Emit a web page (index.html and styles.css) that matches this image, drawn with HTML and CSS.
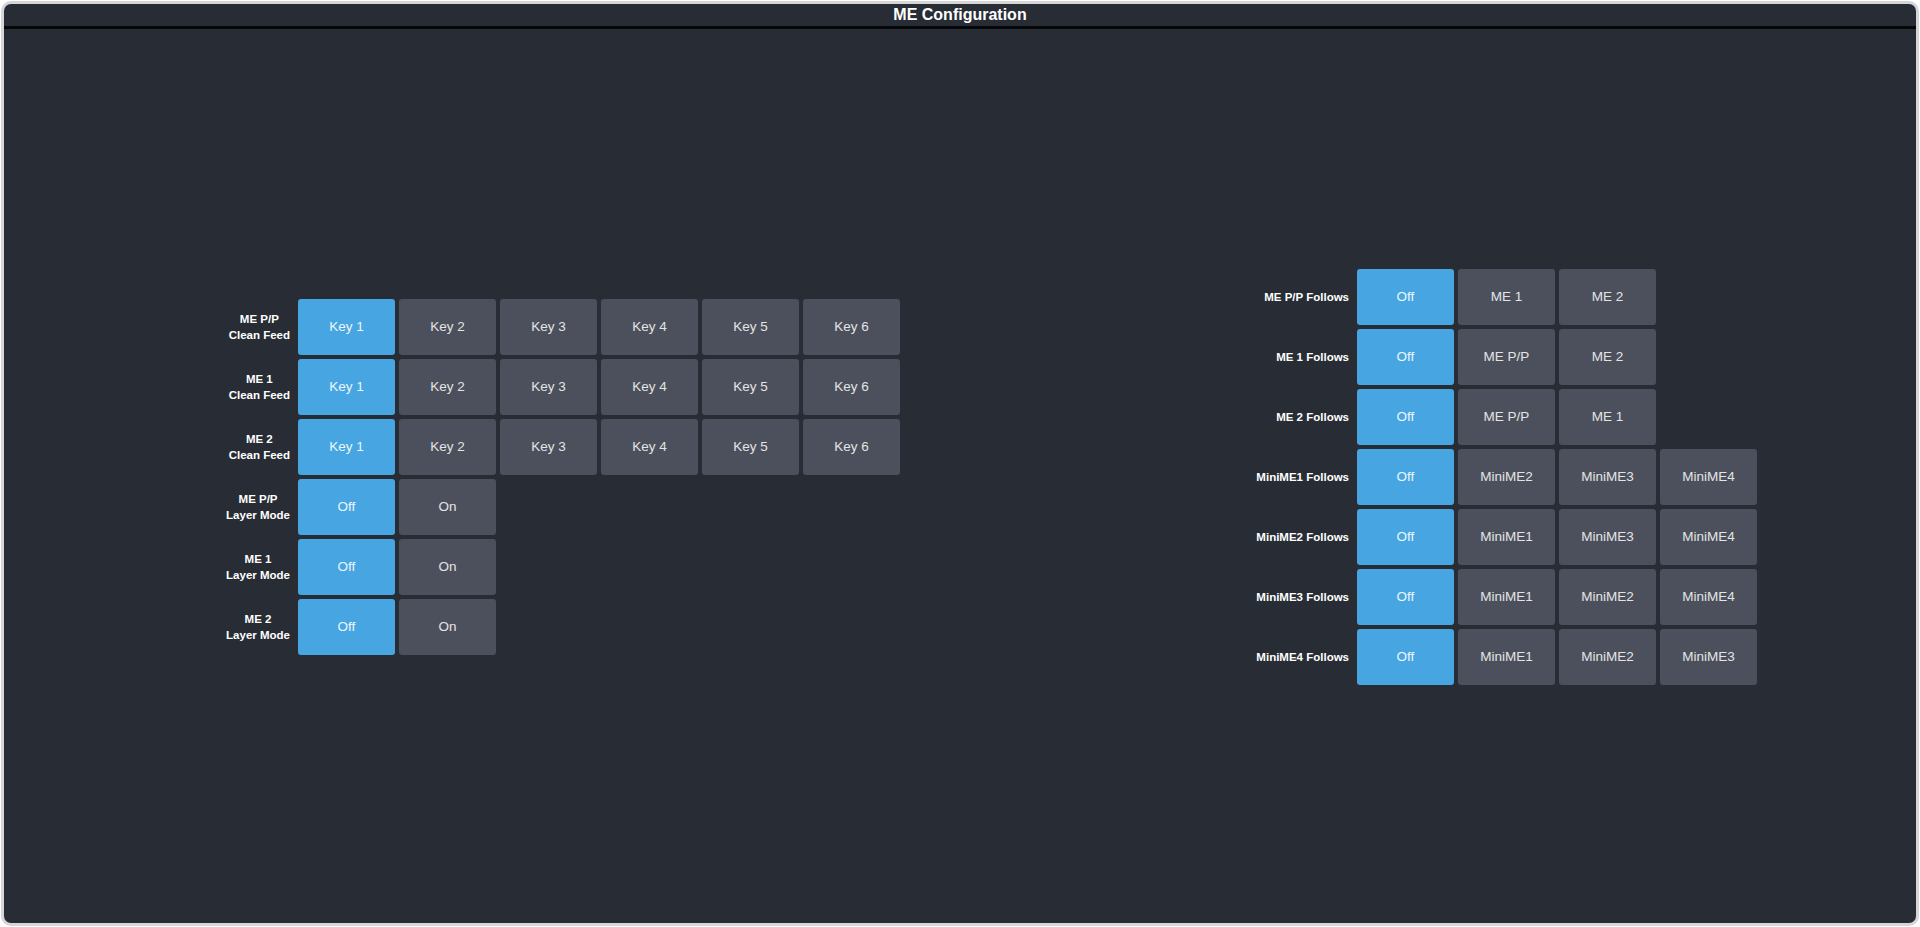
FILE: index.html
```html
<!DOCTYPE html>
<html lang="en">

<head>
    <meta charset="UTF-8">
    <meta name="viewport" content="width=device-width, initial-scale=1.0">
    <title>ME Configuration</title>
    <link rel="stylesheet" href="styles.css">
</head>

<body>
    <div class="frame">
        <div class="titleBar">ME Configuration</div>
        <div class="columns">
            <div class="half">
                <div class="grid cols6">
                    <div class="label"><span>ME P/P<br>Clean Feed</span></div>
                    <div class="btn active">Key 1</div>
                    <div class="btn">Key 2</div>
                    <div class="btn">Key 3</div>
                    <div class="btn">Key 4</div>
                    <div class="btn">Key 5</div>
                    <div class="btn">Key 6</div>

                    <div class="label"><span>ME 1<br>Clean Feed</span></div>
                    <div class="btn active">Key 1</div>
                    <div class="btn">Key 2</div>
                    <div class="btn">Key 3</div>
                    <div class="btn">Key 4</div>
                    <div class="btn">Key 5</div>
                    <div class="btn">Key 6</div>

                    <div class="label"><span>ME 2<br>Clean Feed</span></div>
                    <div class="btn active">Key 1</div>
                    <div class="btn">Key 2</div>
                    <div class="btn">Key 3</div>
                    <div class="btn">Key 4</div>
                    <div class="btn">Key 5</div>
                    <div class="btn">Key 6</div>

                    <div class="label"><span>ME P/P<br>Layer Mode</span></div>
                    <div class="btn active">Off</div>
                    <div class="btn">On</div>

                    <div class="label"><span>ME 1<br>Layer Mode</span></div>
                    <div class="btn active">Off</div>
                    <div class="btn">On</div>

                    <div class="label"><span>ME 2<br>Layer Mode</span></div>
                    <div class="btn active">Off</div>
                    <div class="btn">On</div>
                </div>
            </div>
            <div class="half">
                <div class="grid cols4">
                    <div class="label"><span>ME P/P Follows</span></div>
                    <div class="btn active">Off</div>
                    <div class="btn">ME 1</div>
                    <div class="btn">ME 2</div>

                    <div class="label"><span>ME 1 Follows</span></div>
                    <div class="btn active">Off</div>
                    <div class="btn">ME P/P</div>
                    <div class="btn">ME 2</div>

                    <div class="label"><span>ME 2 Follows</span></div>
                    <div class="btn active">Off</div>
                    <div class="btn">ME P/P</div>
                    <div class="btn">ME 1</div>

                    <div class="label"><span>MiniME1 Follows</span></div>
                    <div class="btn active">Off</div>
                    <div class="btn">MiniME2</div>
                    <div class="btn">MiniME3</div>
                    <div class="btn">MiniME4</div>

                    <div class="label"><span>MiniME2 Follows</span></div>
                    <div class="btn active">Off</div>
                    <div class="btn">MiniME1</div>
                    <div class="btn">MiniME3</div>
                    <div class="btn">MiniME4</div>

                    <div class="label"><span>MiniME3 Follows</span></div>
                    <div class="btn active">Off</div>
                    <div class="btn">MiniME1</div>
                    <div class="btn">MiniME2</div>
                    <div class="btn">MiniME4</div>

                    <div class="label"><span>MiniME4 Follows</span></div>
                    <div class="btn active">Off</div>
                    <div class="btn">MiniME1</div>
                    <div class="btn">MiniME2</div>
                    <div class="btn">MiniME3</div>
                </div>
            </div>
        </div>
    </div>
</body>

</html>
```

FILE: styles.css
```css
* {
    margin: 0;
    padding: 0;
    box-sizing: border-box;
}

html,
body {
    height: 100%;
    background-color: #ffffff;
}

body {
    padding: 1px;
    font-family: "Liberation Sans", Arial, sans-serif;
}

.frame {
    height: 100%;
    display: flex;
    flex-direction: column;
    border: 3px solid #d6d6d6;
    border-radius: 10px;
    background-color: #282c34;
    overflow: hidden;
}

.titleBar {
    height: 25px;
    border-bottom: 3px solid #060708;
    color: #ffffff;
    font-size: 16px;
    font-weight: bold;
    text-align: center;
    line-height: 22px;
}

.columns {
    flex: 1;
    display: flex;
    margin-right: -4px;
    padding-top: 1px;
}

.half {
    flex: 1;
    display: flex;
    align-items: center;
    justify-content: center;
}

.grid {
    display: grid;
    gap: 4px;
    grid-auto-rows: 56px;
}

.cols6 {
    grid-template-columns: 228px repeat(6, 97px);
}

.cols4 {
    grid-template-columns: 228px repeat(4, 97px);
}

.label {
    grid-column: 1;
    display: flex;
    align-items: center;
    justify-content: flex-end;
    padding-right: 4px;
    color: #ffffff;
    font-size: 11.5px;
    font-weight: bold;
    line-height: 16px;
    text-align: center;
}

.btn {
    display: flex;
    align-items: center;
    justify-content: center;
    border-radius: 3px;
    background-color: #4b505c;
    color: #e4e4e4;
    font-size: 13.5px;
}

.btn.active {
    background-color: #47a6e1;
    color: #eef6fc;
}
```
